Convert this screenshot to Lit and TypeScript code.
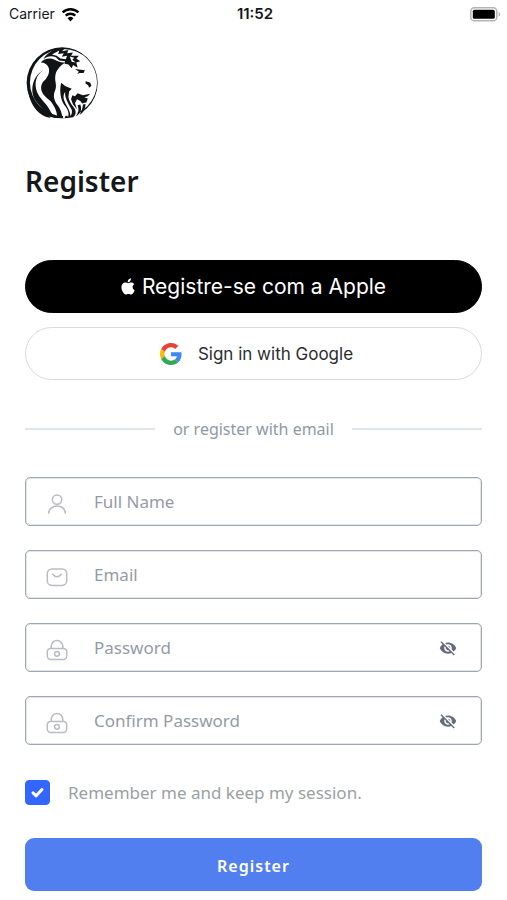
import { LitElement, html, css, svg, nothing } from "lit";
import { customElement, property, state } from "lit/decorators.js";

const wifiIcon = html`<svg class="wifi" viewBox="0 0 20 16" aria-hidden="true">
  <g fill="none" stroke="#000" stroke-width="2.6">
    <path d="M1.6 5.8a12 12 0 0 1 16.8 0" />
    <path d="M4.9 9.2a7.3 7.3 0 0 1 10.2 0" />
  </g>
  <path d="M10 15.4 6.9 12a4.4 4.4 0 0 1 6.2 0Z" />
</svg>`;

const batteryIcon = html`<svg class="battery" viewBox="0 0 31 15" aria-hidden="true">
  <rect x=".8" y=".8" width="26" height="13" rx="3.6" fill="#fff" stroke="#b4b4b4" stroke-width="1.5" />
  <rect x="2.8" y="2.8" width="22" height="9" rx="1.6" />
  <path d="M28.6 5v4.6c2.2-.8 2.2-3.8 0-4.600Z" fill="#b4b4b4" />
</svg>`;

const lionLogo = html`<svg class="logo" viewBox="0 0 228 225" role="img" aria-label="Lion logo">
  <path fill="#111417" fill-rule="evenodd" d="M113 4A108 108 0 1 1 113 220A108 108 0 1 1 113 4ZM117 9A102 102 0 1 0 117 213A102 102 0 1 0 117 9Z" />
  <path fill="#fff" d="M128 210L178 200L176 226L134 226Z" />
  <g fill="#111417">
    <path d="M48 50C58 38 76 34 90 42C100 46 108 52 122 50C108 60 94 72 92 92C90 108 98 118 92 134C86 148 86 160 96 176C82 172 68 162 58 150C46 136 46 118 58 106C70 94 76 80 72 66C68 56 60 50 48 50Z" />
    <path d="M56 74C32 88 28 116 36 138C44 160 64 172 74 192C80 204 86 212 98 219C84 220 70 214 62 204C54 190 38 178 28 160C16 134 22 92 56 74Z" />
    <path d="M10 138C20 168 40 188 64 200L78 218C44 214 16 182 10 138Z" />
    <path d="M72 160C92 170 110 184 114 219L98 219C98 196 86 178 72 160Z" />
    <path d="M56 40C66 20 92 6 124 6L112 16L132 12L128 22L146 20L140 30L164 30L156 38L168 46L156 50L160 66L146 58L142 68L132 56L120 54L122 46L104 44L94 34C80 28 66 32 56 40Z" />
    <path d="M110 112L122 122L142 130L134 138L132 154C134 170 144 180 152 192C156 202 154 210 146 217L130 219C136 204 130 192 120 180C108 164 104 136 110 112Z" />
    <path d="M152 70L182 74L178 82L166 82L158 86L164 78Z" />
    <path d="M184 107L198 111L202 121L195 127L192 119L184 114Z" />
    <path d="M160 144L176 150L198 145L191 153L180 156L191 160L187 171L174 175L168 167L158 162L152 174L158 192L146 178L140 162L144 150L152 153Z" />
    <path d="M168 178C174 192 170 206 154 214C164 202 164 192 160 180Z" />
    <path d="M184 176C184 190 178 202 166 210C172 198 176 188 176 178Z" />
  </g>
  <g fill="#fff">
    <path d="M82 26L104 14L101 24L118 22L112 33L128 30L124 40L108 38L96 30Z" />
    <path d="M136 32L150 36L144 42L154 50L142 48Z" />
    <path d="M100 128C100 154 114 180 124 198C126 206 124 214 120 219L116 219C114 196 106 180 96 166C90 152 96 140 100 128Z" />
    <path d="M122 140C120 160 134 178 142 194C144 202 142 208 138 213C138 194 124 182 118 162C116 152 118 144 122 140Z" />
  </g>
</svg>`;

const appleIcon = html`<svg class="apple-mark" viewBox="0 0 14 17" fill="#fff" aria-hidden="true">
  <path d="M10 .3c.1 1.100-.3 2.100-.9 2.800-.6.8-1.500 1.300-2.400 1.200-.1-1 .3-2 .9-2.700C8.200.9 9.200.4 10 .3Z" />
  <path d="M13.300 6.200c-1.100.7-1.700 1.600-1.700 2.900 0 1.500.8 2.600 2.100 3.100-.4 1.300-1 2.400-1.800 3.300-.6.7-1.200 1.100-1.900 1.100-.9 0-1.300-.5-2.500-.5s-1.700.5-2.500.5c-.8 0-1.400-.5-2-1.200C1.300 13.600.4 11.300.4 9.200c0-3 1.900-4.700 3.900-4.700 1.200 0 2 .7 2.900.7.900 0 1.700-.7 3.100-.7 1.200 0 2.300.6 3 1.700Z" />
</svg>`;

const googleIcon = html`<svg class="google-mark" viewBox="0 0 48 48" aria-hidden="true">
  <path fill="#EA4335" d="M24 9.500c3.540 0 6.710 1.220 9.210 3.600l6.850-6.850C35.900 2.380 30.470 0 24 0 14.620 0 6.510 5.380 2.560 13.220l7.980 6.190C12.430 13.720 17.740 9.500 24 9.500z" />
  <path fill="#4285F4" d="M46.980 24.550c0-1.570-.15-3.090-.38-4.550H24v9.020h12.940c-.58 2.960-2.260 5.480-4.780 7.180l7.730 6c4.510-4.180 7.090-10.360 7.090-17.650z" />
  <path fill="#FBBC05" d="M10.530 28.590c-.48-1.450-.76-2.990-.76-4.590s.27-3.140.76-4.590l-7.980-6.190C.92 16.460 0 20.120 0 24c0 3.880.92 7.540 2.560 10.780l7.970-6.190z" />
  <path fill="#34A853" d="M24 48c6.480 0 11.930-2.130 15.890-5.810l-7.730-6c-2.150 1.450-4.920 2.300-8.160 2.300-6.260 0-11.570-4.220-13.470-9.910l-7.980 6.190C6.510 42.620 14.620 48 24 48z" />
</svg>`;

const fieldIcons = {
  person: svg`<circle cx="11" cy="6.600" r="4.700" /><path d="M2.600 20.800c0-4.600 3.600-7.800 8.400-7.800s8.400 3.200 8.400 7.800" />`,
  mail: svg`<rect x="1.300" y="3" width="19.400" height="16.400" rx="4.600" /><path d="M6.200 7.800c2.900 3.800 6.700 3.800 9.600 0" />`,
  lock: svg`<path d="M5.200 10V7.400a5.800 5.800 0 0 1 11.600 0V10" /><rect x="1.300" y="9.400" width="19.400" height="11" rx="3.400" /><circle cx="11" cy="14.800" r="2.400" />`,
};

const eyeOffIcon = html`<svg class="eye" viewBox="0 0 24 24" aria-hidden="true">
  <path d="M12 7c2.760 0 5 2.240 5 5 0 .65-.13 1.260-.36 1.830l2.920 2.920c1.510-1.260 2.700-2.890 3.430-4.750-1.730-4.390-6-7.500-11-7.500-1.400 0-2.740.25-3.980.7l2.160 2.160C10.740 7.130 11.350 7 12 7zM2 4.270l2.280 2.280.46.46C3.080 8.300 1.780 10.020 1 12c1.730 4.390 6 7.500 11 7.500 1.550 0 3.030-.3 4.380-.84l.42.42L19.730 22 21 20.730 3.270 3 2 4.270zM7.530 9.800l1.550 1.550c-.05.21-.08.43-.08.65 0 1.660 1.340 3 3 3 .22 0 .44-.03.65-.08l1.550 1.550c-.67.33-1.410.53-2.200.53-2.760 0-5-2.240-5-5 0-.79.2-1.530.53-2.200zm4.310-.78l3.150 3.150.02-.16c0-1.660-1.340-3-3-3l-.17.01z" />
</svg>`;

@customElement("form-field")
class FormField extends LitElement {
  @property() label = "";
  @property() icon: keyof typeof fieldIcons = "person";
  @property() type = "text";
  @state() private revealed = false;

  static styles = css`
    :host {
      display: block;
    }
    .field {
      box-sizing: border-box;
      display: flex;
      align-items: center;
      height: 49px;
      padding: 0 24px 0 20px;
      border: 1px solid #a0a7b0;
      box-shadow: inset 0 0 0 1px #e3e6e9;
      border-radius: 5px;
      background: #fff;
    }
    .icon {
      flex: none;
      width: 22px;
      height: 22px;
      margin-top: 4px;
      fill: none;
      stroke: #b9bdc3;
      stroke-width: 1.5;
    }
    .input {
      flex: 1;
      min-width: 0;
      margin-left: 26px;
      padding: 0;
      border: 0;
      outline: 0;
      background: none;
      font: 17px/24px "Noto Sans", sans-serif;
      color: #2b303a;
    }
    .input::placeholder {
      color: #949ba6;
      opacity: 1;
    }
    .reveal {
      display: flex;
      padding: 0;
      border: 0;
      background: none;
      cursor: pointer;
    }
    .eye {
      width: 18px;
      height: 18px;
      fill: #646b7a;
    }
  `;

  render() {
    const secret = this.type === "password";
    return html`<div class="field">
      <svg class="icon" viewBox="0 0 22 22" aria-hidden="true">${fieldIcons[this.icon]}</svg>
      <input
        class="input"
        type=${secret && this.revealed ? "text" : this.type}
        placeholder=${this.label}
        aria-label=${this.label}
      />
      ${secret
        ? html`<button
            class="reveal"
            type="button"
            aria-label="Toggle visibility"
            @click=${() => (this.revealed = !this.revealed)}
          >${eyeOffIcon}</button>`
        : nothing}
    </div>`;
  }
}

@customElement("app-root")
class AppRoot extends LitElement {
  static styles = css`
    :host {
      display: block;
      min-height: 100vh;
      background: #fff;
      color: #15171a;
      font-family: "Noto Sans", sans-serif;
    }
    .status {
      display: grid;
      grid-template-columns: 1fr auto 1fr;
      align-items: center;
      height: 28px;
      padding: 0 6px 0 9px;
      font: 14px/20px Inter, sans-serif;
    }
    .carrier {
      display: flex;
      align-items: center;
      gap: 6px;
    }
    .time {
      font-size: 15px;
      font-weight: 600;
    }
    .wifi {
      width: 19px;
      height: 15px;
    }
    .battery {
      justify-self: end;
      width: 31px;
      height: 15px;
    }
    .page {
      padding: 18px 25px 9px;
    }
    .logo {
      display: block;
      width: 75px;
      height: 74px;
    }
    .title {
      margin: 41px 0 59px;
      font-size: 28px;
      line-height: 40px;
      font-weight: 600;
    }
    .social {
      display: grid;
      gap: 14px;
    }
    .social-button {
      box-sizing: border-box;
      display: flex;
      align-items: center;
      justify-content: center;
      width: 100%;
      height: 53px;
      padding: 0;
      border: 1px solid #d5dbde;
      border-radius: 27px;
      background: #fff;
      color: #2b2d31;
      font: 17px/24px Inter, sans-serif;
      cursor: pointer;
    }
    .apple {
      border-color: #000;
      background: #000;
      color: #fff;
      font-size: 21px;
      gap: 7px;
    }
    .google {
      padding-left: 6px;
      gap: 16px;
    }
    .apple-mark {
      width: 14px;
      height: 17px;
    }
    .google-mark {
      width: 22px;
      height: 22px;
    }
    .divider {
      display: flex;
      align-items: center;
      gap: 18px;
      margin: 37px 0 36px;
      font-size: 16px;
      line-height: 24px;
      color: #8f99a5;
    }
    .rule {
      flex: 1;
      height: 2px;
      background: #e0e5e9;
    }
    .fields {
      display: grid;
      gap: 24px;
    }
    .remember {
      display: flex;
      align-items: center;
      gap: 18px;
      margin: 35px 0 33px;
      font-size: 17px;
      line-height: 24px;
      color: #9b9fa4;
    }
    .tick {
      display: grid;
      flex: none;
      width: 25px;
      height: 25px;
    }
    .checkbox,
    .mark {
      grid-area: 1 / 1;
      width: 25px;
      height: 25px;
      margin: 0;
    }
    .checkbox {
      appearance: none;
      box-sizing: border-box;
      border: 1px solid #3366ff;
      border-radius: 4px;
      background: #fff;
    }
    .checkbox:checked {
      background: #3366ff;
    }
    .mark {
      pointer-events: none;
      fill: none;
      stroke: #fff;
      stroke-width: 3;
      stroke-linecap: round;
      stroke-linejoin: round;
    }
    .submit {
      display: block;
      width: 100%;
      height: 53px;
      padding: 2px 0 0;
      border: 0;
      border-radius: 9px;
      background: #527ff0;
      color: #fff;
      font: 600 16px/24px "Noto Sans", sans-serif;
      letter-spacing: 1px;
      cursor: pointer;
    }
  `;

  render() {
    return html`
      <header class="status">
        <span class="carrier">Carrier ${wifiIcon}</span>
        <span class="time">11:52</span>
        ${batteryIcon}
      </header>
      <main class="page">
        ${lionLogo}
        <h1 class="title">Register</h1>
        <div class="social">
          <button class="social-button apple" type="button">${appleIcon}<span>Registre-se com a Apple</span></button>
          <button class="social-button google" type="button">${googleIcon}<span>Sign in with Google</span></button>
        </div>
        <div class="divider"><span class="rule"></span>or register with email<span class="rule"></span></div>
        <form @submit=${(e: Event) => e.preventDefault()}>
          <div class="fields">
            <form-field label="Full Name" icon="person"></form-field>
            <form-field label="Email" icon="mail" type="email"></form-field>
            <form-field label="Password" icon="lock" type="password"></form-field>
            <form-field label="Confirm Password" icon="lock" type="password"></form-field>
          </div>
          <label class="remember">
            <span class="tick">
              <input class="checkbox" type="checkbox" checked />
              <svg class="mark" viewBox="0 0 25 25" aria-hidden="true"><path d="m8 12.800 3.200 3L17 9.600" /></svg>
            </span>
            Remember me and keep my session.
          </label>
          <button class="submit" type="submit">Register</button>
        </form>
      </main>
    `;
  }
}
